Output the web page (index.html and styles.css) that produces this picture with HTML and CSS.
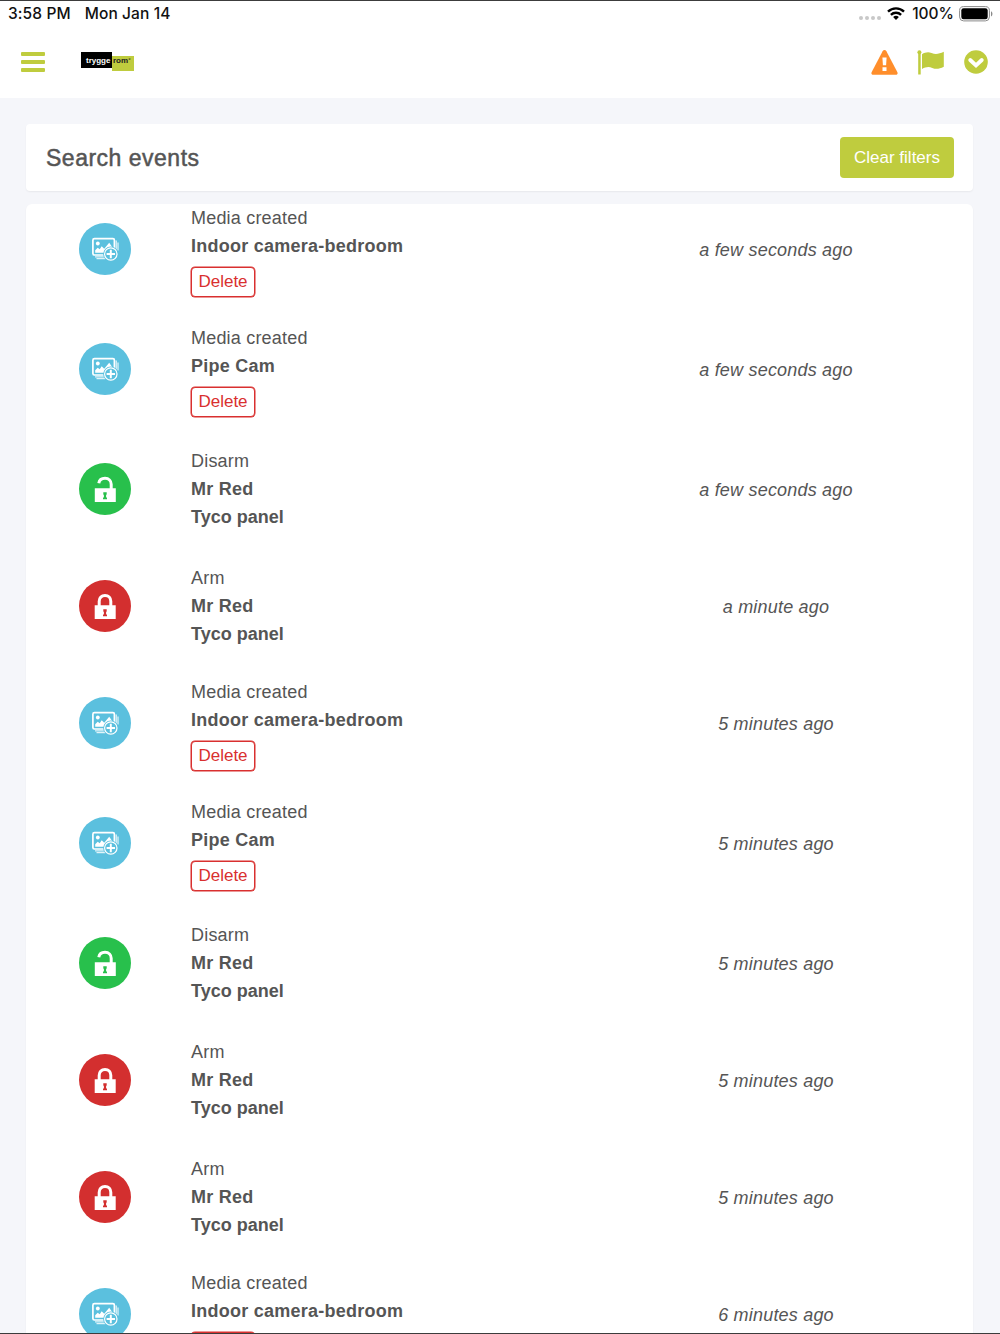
FILE: index.html
```html
<!DOCTYPE html>
<html lang="en">
<head>
  <meta charset="UTF-8" />
  <meta name="viewport" content="width=device-width, initial-scale=1.0"/>
  <title>Tryggerom - Events</title>
  <link rel="stylesheet" href="styles.css">
</head>
<body>
  <!-- Shared icons -->
  <svg class="sprite" width="0" height="0">
    <symbol id="icon-media" viewBox="0 0 52 52">
      <g fill="none" stroke="#fff">
        <rect x="13.900" y="15.700" width="21.500" height="16.300" rx="1.500" stroke-width="1.700"/>
        <path d="M37.200 17.500v9M39 19.500v8M16 33.900h10M17.500 35.700h9" stroke-width="1"/>
      </g>
      <circle cx="18.800" cy="20.500" r="1.900" fill="#fff"/>
      <path d="M16.200 29.800v-2.500l2.500-2.500 2 1.500 2-3 2.500 2.500 5-6 3.500 5v5z" fill="#fff"/>
      <circle cx="31.800" cy="31" r="7.600" fill="#5bc0de"/>
      <circle cx="31.800" cy="31" r="6.200" fill="#5bc0de" stroke="#fff" stroke-width="1.200"/>
      <path d="M31.800 26.800v8.400M27.600 31h8.400" stroke="#fff" stroke-width="2"/>
    </symbol>
    <symbol id="icon-unlock" viewBox="0 0 52 52">
      <path d="M19.800 20.300c.5-3.300 3-5 6.200-5 3.800 0 6.200 2.600 6.200 6v5" fill="none" stroke="#fff" stroke-width="3"/>
      <path d="M15.800 25.200h21V39h-21z" fill="#fff"/>
      <path d="M24.300 29.200h3.400v2l-.6 1v2.300h.9v1.700h-4v-1.700h.9v-2.300l-.6-1z" fill="#28c04c"/>
    </symbol>
    <symbol id="icon-lock" viewBox="0 0 52 52">
      <path d="M20.200 26v-4.700c0-3.400 2.300-5.800 5.800-5.800s5.800 2.400 5.800 5.800V26" fill="none" stroke="#fff" stroke-width="3"/>
      <path d="M15.700 25.200h21V39h-21z" fill="#fff"/>
      <path d="M24.300 29.200h3.400v2l-.6 1v2.300h.9v1.700h-4v-1.700h.9v-2.300l-.6-1z" fill="#d32f2f"/>
    </symbol>
  </svg>

  <div class="status-bar">
    <div class="status-left">
      <span class="time">3:58 PM</span>
      <span>Mon Jan 14</span>
    </div>
    <div class="status-right">
      <svg width="22" height="6" viewBox="0 0 22 6" fill="#c8c8c8">
        <circle cx="2" cy="3" r="2"/><circle cx="8" cy="3" r="2"/><circle cx="14" cy="3" r="2"/><circle cx="20" cy="3" r="2"/>
      </svg>
      <svg class="wifi" width="18" height="13" viewBox="0 0 18 13">
        <g fill="none" stroke="#000" stroke-width="2.400">
          <path d="M1 4.700a11.400 11.400 0 0 1 16 0"/>
          <path d="M3.900 7.900a7.300 7.300 0 0 1 10.200 0"/>
        </g>
        <path d="M9 13L6.100 10.100a4.200 4.200 0 0 1 5.800 0z"/>
      </svg>
      <span class="percent">100%</span>
      <svg width="34" height="16" viewBox="0 0 34 16">
        <rect x=".6" y=".6" width="29.800" height="14.300" rx="4" fill="#fff" stroke="#8a8a8a"/>
        <rect x="2.300" y="2.300" width="26.400" height="10.900" rx="2.300"/>
        <path d="M32 5.200c1.900.8 1.900 4.400 0 5.200z" fill="#8a8a8a"/>
      </svg>
    </div>
  </div>

  <nav class="navbar">
    <div class="nav-left">
      <div class="menu"><span></span><span></span><span></span></div>
      <div class="logo"><span class="logo-dark">trygge</span><span class="logo-green">rom<sup>°</sup></span></div>
    </div>
    <div class="nav-right">
      <svg width="27" height="25" viewBox="0 0 27 25">
        <path d="M11.600 1.200c.8-1.500 3-1.500 3.800 0l11 21c.6 1.300 0 2.500-1.500 2.500H2.100c-1.500 0-2.100-1.200-1.500-2.500z" fill="#ff8e2b"/>
        <path d="M11.400 7.500h4.200l-.5 7.800h-3.200zM11.500 17.300h4v3.600h-4z" fill="#fff"/>
      </svg>
      <svg width="28" height="25" viewBox="0 0 28 25" fill="#bfcc3e">
        <circle cx="2.400" cy="2.200" r="2"/>
        <path d="M1.200 2h2.500v22.500H1.200z"/>
        <path d="M5 4.200c3-1.700 6-2.500 9.500-1.200 4.500 1.700 7.500.8 12.300-1.300v15c-4.300 2.100-7.700 2.900-11.500 1.200-3.500-1.600-6.500-1-10.300 1z"/>
      </svg>
      <svg width="24" height="24" viewBox="0 0 24 24">
        <circle cx="12" cy="12" r="11.800" fill="#bfcc3e"/>
        <path d="M6.200 10l5.800 5.500 5.800-5.500" fill="none" stroke="#fff" stroke-width="3.800" stroke-linecap="round"/>
      </svg>
    </div>
  </nav>

  <main class="container">
    <div class="search-card">
      <h2>Search events</h2>
      <button class="clear-btn">Clear filters</button>
    </div>

    <div class="events">
      <div class="event media">
        <svg class="badge blue"><use href="#icon-media"/></svg>
        <div class="info"><p>Media created</p><strong>Indoor camera-bedroom</strong><button class="delete-btn">Delete</button></div>
        <em>a few seconds ago</em>
      </div>
      <div class="event media">
        <svg class="badge blue"><use href="#icon-media"/></svg>
        <div class="info"><p>Media created</p><strong>Pipe Cam</strong><button class="delete-btn">Delete</button></div>
        <em>a few seconds ago</em>
      </div>
      <div class="event">
        <svg class="badge green"><use href="#icon-unlock"/></svg>
        <div class="info"><p>Disarm</p><strong>Mr Red</strong><strong class="panel">Tyco panel</strong></div>
        <em>a few seconds ago</em>
      </div>
      <div class="event">
        <svg class="badge red"><use href="#icon-lock"/></svg>
        <div class="info"><p>Arm</p><strong>Mr Red</strong><strong class="panel">Tyco panel</strong></div>
        <em>a minute ago</em>
      </div>
      <div class="event media">
        <svg class="badge blue"><use href="#icon-media"/></svg>
        <div class="info"><p>Media created</p><strong>Indoor camera-bedroom</strong><button class="delete-btn">Delete</button></div>
        <em>5 minutes ago</em>
      </div>
      <div class="event media">
        <svg class="badge blue"><use href="#icon-media"/></svg>
        <div class="info"><p>Media created</p><strong>Pipe Cam</strong><button class="delete-btn">Delete</button></div>
        <em>5 minutes ago</em>
      </div>
      <div class="event">
        <svg class="badge green"><use href="#icon-unlock"/></svg>
        <div class="info"><p>Disarm</p><strong>Mr Red</strong><strong class="panel">Tyco panel</strong></div>
        <em>5 minutes ago</em>
      </div>
      <div class="event">
        <svg class="badge red"><use href="#icon-lock"/></svg>
        <div class="info"><p>Arm</p><strong>Mr Red</strong><strong class="panel">Tyco panel</strong></div>
        <em>5 minutes ago</em>
      </div>
      <div class="event">
        <svg class="badge red"><use href="#icon-lock"/></svg>
        <div class="info"><p>Arm</p><strong>Mr Red</strong><strong class="panel">Tyco panel</strong></div>
        <em>5 minutes ago</em>
      </div>
      <div class="event media">
        <svg class="badge blue"><use href="#icon-media"/></svg>
        <div class="info"><p>Media created</p><strong>Indoor camera-bedroom</strong><button class="delete-btn" aria-label="Delete"></button></div>
        <em>6 minutes ago</em>
      </div>
    </div>
  </main>
</body>
</html>
```
FILE: styles.css
```css
* {
  box-sizing: border-box;
}
body {
  font-family: "Liberation Sans", Arial, sans-serif;
  font-size: 18px;
  color: #555;
  background: #f5f6fa;
  margin: 0;
  height: 1334px;
  overflow: hidden;
  border-top: 1px solid #3c3c3c;
  border-bottom: 1px solid #3c3c3c;
}
.sprite {
  display: block;
}
.status-bar {
  display: flex;
  justify-content: space-between;
  height: 25px;
  padding: 0 7px 0 8px;
  background: #fff;
  font-family: Inter, sans-serif;
  font-size: 15.5px;
  font-weight: 500;
  line-height: 25px;
  color: #111;
}
.status-left {
  display: flex;
  gap: 14px;
  letter-spacing: 0.1px;
}
.status-right {
  display: flex;
  align-items: center;
}
.status-right svg:first-child {
  margin-top: 8px;
}
.wifi {
  margin: 0 7px 0 6px;
}
.percent {
  margin-right: 5px;
}
.navbar {
  display: flex;
  justify-content: space-between;
  align-items: center;
  height: 72px;
  padding: 0 12px 0 21px;
  background: #fff;
}
.nav-left {
  display: flex;
  align-items: center;
  gap: 36px;
}
.menu {
  display: flex;
  flex-direction: column;
  gap: 4px;
  width: 24px;
}
.menu span {
  height: 4px;
  border-radius: 1px;
  background: #bfcc3e;
}
.logo {
  display: flex;
  align-items: flex-start;
  margin-top: -1px;
  font-size: 8px;
  font-weight: bold;
}
.logo-dark {
  width: 31px;
  height: 16px;
  line-height: 17px;
  padding-left: 5px;
  background: #000;
  color: #fff;
}
.logo-green {
  width: 22px;
  height: 15px;
  margin-top: 4px;
  line-height: 9px;
  padding-left: 1px;
  background: #bfcc3e;
  color: #222;
}
.logo-green sup {
  font-size: 6px;
  line-height: 0;
  vertical-align: 1px;
}
.nav-right {
  display: flex;
  align-items: center;
  gap: 19px;
}
.container {
  padding: 26px 27px 0 26px;
}
.search-card {
  display: flex;
  justify-content: space-between;
  align-items: center;
  height: 67px;
  padding: 0 19px 0 20px;
  border-radius: 4px;
  background: #fff;
  box-shadow: 0 1px 2px rgba(0,0,0,0.06);
}
h2 {
  margin: 2px 0 0;
  font-size: 23px;
  font-weight: normal;
  letter-spacing: 0.5px;
  -webkit-text-stroke: 0.5px #555;
}
button {
  font-family: inherit;
  font-size: 17px;
  cursor: pointer;
}
.clear-btn {
  width: 114px;
  height: 41px;
  padding: 0;
  border: none;
  border-radius: 4px;
  background: #bfcc3e;
  color: #fff;
}
.events {
  margin-top: 13px;
  border-radius: 6px;
  background: #fff;
  box-shadow: 0 1px 2px rgba(0,0,0,0.06);
}
.event {
  display: grid;
  grid-template-columns: 112px 498px 174px;
  height: 117.150px;
  padding-left: 53px;
  letter-spacing: 0.2px;
}
.event.media {
  height: 119.850px;
}
.badge {
  width: 52px;
  height: 52px;
  margin-top: 19px;
  border-radius: 50%;
}
.blue {
  background: #5bc0de;
}
.green {
  background: #28c04c;
}
.red {
  background: #d32f2f;
}
.info {
  padding-top: 3px;
}
.media .info {
  padding-top: 0;
}
.info p {
  margin: 0;
  line-height: 28px;
}
.info strong {
  display: block;
  line-height: 28px;
  letter-spacing: 0.25px;
}
.info .panel {
  line-height: 29px;
  letter-spacing: 0;
}
.delete-btn {
  display: block;
  width: 64px;
  height: 30px;
  margin-top: 7px;
  padding: 0;
  border: 1px solid #d9302f;
  border-radius: 4px;
  background: #fff;
  box-shadow: 0 0 0 0.5px #d9302f;
  color: #d9302f;
}
em {
  margin-top: 33px;
  line-height: 27px;
  text-align: center;
}
```
